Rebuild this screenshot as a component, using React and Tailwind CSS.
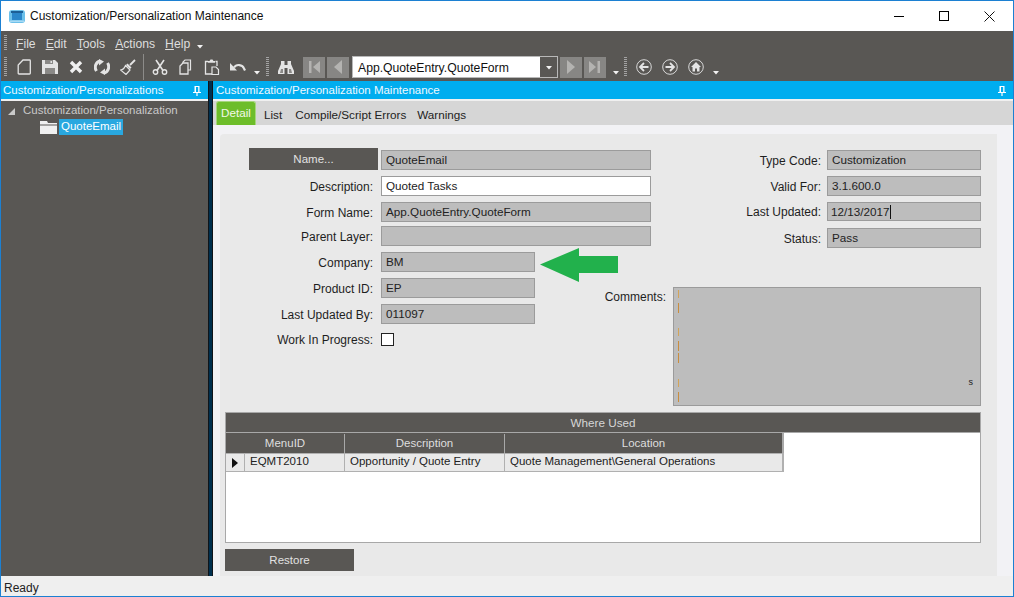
import React from "react";

const ink = "#e4e4e4";

function Grip({ className = "" }) {
  return (
    <div
      className={`w-[3px] flex-none bg-[repeating-linear-gradient(to_bottom,#a3a3a3_0,#a3a3a3_1px,transparent_1px,transparent_2px)] ${className}`}
    />
  );
}

function Caret({ className = "" }) {
  return (
    <svg width="6" height="5" viewBox="0 0 6 5" className={`flex-none ${className}`}>
      <path d="M0 1h6L3 4.5z" fill="#f2f2f2" />
    </svg>
  );
}

function Ico({ children, className = "" }) {
  return (
    <svg width="16" height="16" viewBox="0 0 16 16" fill="none" className={`flex-none ${className}`}>
      {children}
    </svg>
  );
}

function Pin() {
  return (
    <svg width="8" height="10" viewBox="0 0 8 10" className="flex-none">
      <path d="M1.5 0h5v6H8v1H4.6v3H3.4V7H0V6h1.5zM3 1v5h2.2V1z" fill="#fff" fillRule="evenodd" />
    </svg>
  );
}

function NavBtn({ d, bar }) {
  return (
    <div className="w-[22px] h-[21px] flex-none bg-[#878684] flex items-center justify-center">
      <svg width="14" height="14" viewBox="0 0 14 14">
        <path d={d} fill="#b4b3b1" />
        {bar && <path d={bar} fill="#b4b3b1" />}
      </svg>
    </div>
  );
}

function Field({ children, className = "w-[270px] h-5", white }) {
  return (
    <div
      className={`flex-none border border-[#9b9b9b] pl-[4px] flex items-center text-[11.7px] text-[#222] ${
        white ? "bg-white" : "bg-[#bdbdbd]"
      } ${className}`}
    >
      {children}
    </div>
  );
}

function Label({ children, className = "w-[148px]" }) {
  return <div className={`flex-none text-right text-[12px] text-[#1e1e1e] pt-px ${className}`}>{children}</div>;
}

function Row({ label, children, className = "" }) {
  return (
    <div className={`flex items-center gap-2 h-5 ${className}`}>
      <Label>{label}</Label>
      {children}
    </div>
  );
}

function SideRow({ label, children, className = "" }) {
  return (
    <div className={`flex items-center justify-end gap-[6px] ${className}`}>
      <Label className="w-[100px]">{label}</Label>
      {children}
    </div>
  );
}

export default function App() {
  return (
    <div
      className="w-[1014px] h-[597px] flex flex-col border border-[#1c80d2] bg-white overflow-hidden text-[12px]"
      style={{ fontFamily: '"Liberation Sans", Arial, sans-serif' }}
    >
      {/* title bar */}
      <div className="h-[30px] flex-none flex items-center bg-white">
        <svg width="16" height="13" viewBox="0 0 16 13" className="ml-2 flex-none">
          <rect x="0" y="0" width="16" height="13" rx="3" fill="#6cc0ea" />
          <rect x="2" y="1" width="12" height="2" fill="#1d5f96" />
          <rect x="3" y="3" width="10" height="7" fill="#2b86c9" />
          <rect x="1" y="10.5" width="14" height="1.5" fill="#a8daf4" />
        </svg>
        <span className="ml-[5px] text-[12px] text-[#111]">Customization/Personalization Maintenance</span>
        <div className="ml-auto flex items-center mr-[18px]">
          <div className="w-[10px] h-px bg-black" />
          <div className="w-[10px] h-[10px] border border-black ml-[35px]" />
          <svg width="11" height="11" viewBox="0 0 11 11" className="ml-[35px]">
            <path d="M.5.5l10 10M10.5.5l-10 10" stroke="#111" />
          </svg>
        </div>
      </div>

      {/* menu */}
      <div className="h-[22px] flex-none flex items-center bg-[#595754] text-[#dedede] text-[12.2px]">
        <Grip className="ml-[3px] h-[15px]" />
        <div className="ml-[9px] flex gap-[10px] pt-[4px]">
          <span><u>F</u>ile</span>
          <span><u>E</u>dit</span>
          <span><u>T</u>ools</span>
          <span><u>A</u>ctions</span>
          <span><u>H</u>elp</span>
        </div>
        <Caret className="ml-[7px] mt-[8px]" />
      </div>

      {/* toolbar */}
      <div className="h-[28px] flex-none flex items-center bg-[#595754]">
        <Grip className="ml-[3px] h-[20px]" />
        <div className="ml-[9px] flex gap-[10px] items-center">
          <Ico>
            <path d="M7 1h6.5a.8.8 0 0 1 .8.8v12.4a.8.8 0 0 1-.8.8H3a.8.8 0 0 1-.8-.8V6z" stroke={ink} strokeWidth="1.3" />
          </Ico>
          <Ico>
            <path d="M0 1h13l3 3v11H0z" fill={ink} />
            <path d="M3 1h8v4H3z" fill="#8a8987" />
            <path d="M8.5 2H10v2H8.5z" fill={ink} />
            <path d="M3 9h10v6H3z" fill="#8a8987" />
          </Ico>
          <Ico>
            <path d="M3 3l10 10M13 3L3 13" stroke="#f0f0f0" strokeWidth="3.4" />
          </Ico>
          <Ico>
            <path d="M2.500 12A6.500 6.500 0 0 1 6 2M13.500 4a6.500 6.500 0 0 1-3.500 10" stroke={ink} strokeWidth="3" />
            <path d="M5 0l5 2.500L5 6.500zM11 16l-5-2.500L11 9.500z" fill={ink} />
          </Ico>
          <Ico>
            <path d="M10 6l5-5" stroke={ink} strokeWidth="1.8" />
            <path d="M7.500 4.500l4 4-1.500 1.500-4-4z" fill={ink} />
            <path d="M5.500 6.500L10 11l-4 4.500-5.500-4.500c2 0 4-2 5-4.500z" stroke={ink} strokeWidth="1.2" />
          </Ico>
        </div>
        <div className="ml-[7px] w-px h-[26px] bg-[#8c8b89] flex-none" />
        <div className="ml-[8px] flex gap-[10px] items-center">
          <Ico>
            <circle cx="3.5" cy="13" r="2.2" stroke={ink} strokeWidth="1.4" />
            <circle cx="12.5" cy="13" r="2.2" stroke={ink} strokeWidth="1.4" />
            <path d="M5 11.500L12 1M11 11.500L4 1" stroke={ink} strokeWidth="1.6" />
          </Ico>
          <Ico>
            <path d="M5 4V3l2-2h5.500v10H10" stroke={ink} strokeWidth="1.2" />
            <path d="M5 4h5v11H2V7z" stroke={ink} strokeWidth="1.3" />
          </Ico>
          <Ico>
            <path d="M4 2.500H1.500V15H8" stroke={ink} strokeWidth="1.3" />
            <path d="M11.500 2.500H13V7" stroke={ink} strokeWidth="1.3" />
            <path d="M4 3.800V2h1.500L6.500.500h2L9.500 2H11v1.800z" fill={ink} />
            <path d="M8 8h4l2.500 2.500V15.500H8z" stroke={ink} strokeWidth="1.2" />
          </Ico>
          <Ico>
            <path d="M4 8.500A5.500 5 0 0 1 14 9.500l1 2" stroke={ink} strokeWidth="2.2" />
            <path d="M0 4v7.500h7z" fill={ink} />
          </Ico>
        </div>
        <Caret className="ml-[8px] mt-[11px]" />
        <Grip className="ml-[6px] h-[20px]" />
        <Ico className="ml-[9px]">
          <path d="M3 2h3.500v4h3V2H13v3l3 7v3H9.500V9h-3v6H0v-3l3-7z" fill={ink} />
          <path d="M3 10h2v4H2zM11 10h2l1 4h-3z" fill="#8a8987" />
        </Ico>
        <div className="ml-[9px]">
          <NavBtn d="M6 7l7-6v12z" bar="M2 1h2.500v12H2z" />
        </div>
        <div className="ml-[2px]">
          <NavBtn d="M3 7l8-7v14z" />
        </div>
        <div className="ml-[3px] w-[206px] h-[22px] flex-none border border-[#b8b8b8] bg-white flex">
          <div className="flex-1 pl-[5px] pt-[2px] flex items-center text-[12.2px] text-[#111]">App.QuoteEntry.QuoteForm</div>
          <div className="w-[17px] bg-[#595754] flex items-center justify-center">
            <Caret />
          </div>
        </div>
        <div className="ml-[2px]">
          <NavBtn d="M3 0l8 7-8 7z" />
        </div>
        <div className="ml-[2px]">
          <NavBtn d="M1 1l7 6-7 6z" bar="M9.500 1H12v12H9.500z" />
        </div>
        <Caret className="ml-[7px] mt-[11px]" />
        <Grip className="ml-[5px] h-[20px]" />
        <div className="ml-[9px] flex gap-[10px] items-center">
          <Ico>
            <circle cx="8" cy="8" r="7.3" stroke="#d8d8d8" strokeWidth="1" />
            <path d="M12.500 8H5M8 4L4 8l4 4" stroke={ink} strokeWidth="1.8" />
          </Ico>
          <Ico>
            <circle cx="8" cy="8" r="7.3" stroke="#d8d8d8" strokeWidth="1" />
            <path d="M3.500 8H11M8 4l4 4-4 4" stroke={ink} strokeWidth="1.8" />
          </Ico>
          <Ico>
            <circle cx="8" cy="8" r="7.3" stroke="#d8d8d8" strokeWidth="1" />
            <path d="M8 3L3 8h1.500v4.500h2.500V9.500h2v3h2.500V8H13z" fill={ink} />
          </Ico>
        </div>
        <Caret className="ml-[9px] mt-[11px]" />
      </div>

      {/* panels */}
      <div className="flex-1 min-h-0 flex bg-[#595754]">
        <div className="w-[207px] flex-none flex flex-col">
          <div className="h-[18px] flex-none bg-[#00adef] flex items-center justify-between pl-[2px] pr-[7px] pt-px text-[11.5px] text-[#eef9ff]">
            <span>Customization/Personalizations</span>
            <Pin />
          </div>
          <div className="h-[2px] flex-none bg-[#f0f0f0]" />
          <div className="pt-px">
            <div className="h-[17px] flex items-center text-[11.5px] text-[#c9c9c9]">
              <svg width="7" height="7" viewBox="0 0 7 7" className="ml-[7px] mt-px flex-none">
                <path d="M7 0v7H0z" fill="#c9c9c9" />
              </svg>
              <span className="ml-[8px]">Customization/Personalization</span>
            </div>
            <div className="flex items-center">
              <svg width="17" height="14" viewBox="0 0 17 14" className="ml-[39px] flex-none">
                <path d="M0 1h7l1 2h9v1.500H0z" fill="#f0f0f0" />
                <path d="M0 5.500h17V14H0z" fill="#f0f0f0" />
              </svg>
              <span className="ml-[2px] h-4 px-[2px] flex items-center bg-[#29a8e0] text-[11.5px] text-white">QuoteEmail</span>
            </div>
          </div>
        </div>

        <div className="w-[5px] flex-none bg-[#00304f] border-x border-[#10151a]" />

        <div className="flex-1 min-w-0 flex flex-col bg-[#f2f2f5]">
          <div className="h-[18px] flex-none bg-[#00adef] flex items-center justify-between pl-[3px] pr-[7px] pt-px text-[11.5px] text-[#eef9ff]">
            <span>Customization/Personalization Maintenance</span>
            <Pin />
          </div>
          <div className="h-[2px] flex-none bg-[#f0f0f0]" />
          <div className="h-[24px] flex-none bg-[#d6d6d6] flex items-end text-[11.7px] text-[#222]">
            <div className="ml-[3px] w-[40px] h-[24px] pb-px bg-[#6dbd2a] border border-b-0 border-[#a5d67c] rounded-t-[3px] flex items-center justify-center text-[#f2f8e8]">
              Detail
            </div>
            <div className="h-full flex items-center ml-[8px] gap-[11px] pt-[3px]">
              <span className="mr-[2px]">List</span>
              <span>Compile/Script Errors</span>
              <span>Warnings</span>
            </div>
          </div>

          <div className="flex-1 min-h-0 ml-[7px] mr-[16px] mt-[9px] bg-[#e9e9e9] rounded-tl-[4px] pl-[5px] pt-[14px]">
            <div className="flex h-[264px]">
              {/* left column of the form */}
              <div className="w-[426px] flex-none">
                <div className="flex items-end">
                  <div className="ml-[24px] w-[129px] h-[22px] pt-px bg-[#595754] text-[11.5px] text-[#e2e2e2] flex items-center justify-center flex-none">
                    Name...
                  </div>
                  <div className="ml-[3px]">
                    <Field>QuoteEmail</Field>
                  </div>
                </div>
                <Row label="Description:" className="mt-[6px]">
                  <Field white>Quoted Tasks</Field>
                </Row>
                <Row label="Form Name:" className="mt-[6px]">
                  <Field>App.QuoteEntry.QuoteForm</Field>
                </Row>
                <Row label="Parent Layer:" className="mt-[4px]">
                  <Field />
                </Row>
                <Row label="Company:" className="mt-[6px]">
                  <Field className="w-[154px] h-5">BM</Field>
                  <svg width="80" height="34" viewBox="0 0 80 34" className="ml-[-4px] mt-[6px] flex-none">
                    <path d="M1 16.500L40 0v8h39v17H40v9z" fill="#22b14c" />
                  </svg>
                </Row>
                <Row label="Product ID:" className="mt-[6px]">
                  <Field className="w-[154px] h-5">EP</Field>
                </Row>
                <Row label="Last Updated By:" className="mt-[6px]">
                  <Field className="w-[154px] h-5">011097</Field>
                </Row>
                <div className="flex items-center gap-2 mt-[6px]">
                  <Label>Work In Progress:</Label>
                  <div className="w-[13px] h-[13px] bg-white border border-[#222] flex-none" />
                </div>
              </div>

              {/* right column of the form */}
              <div className="w-[330px] flex-none pt-[2px]">
                <SideRow label="Type Code:">
                  <Field className="w-[154px] h-5">Customization</Field>
                </SideRow>
                <SideRow label="Valid For:" className="mt-[6px]">
                  <Field className="w-[154px] h-5">3.1.600.0</Field>
                </SideRow>
                <SideRow label="Last Updated:" className="mt-[6px]">
                  <Field className="w-[154px] h-[19px]">
                    <span className="-ml-px">12/13/2017</span>
                    <span className="w-px h-[14px] bg-[#111]" />
                  </Field>
                </SideRow>
                <SideRow label="Status:" className="mt-[7px]">
                  <Field className="w-[154px] h-5">Pass</Field>
                </SideRow>
                <div className="flex justify-end gap-[7px] mt-[39px] ml-[-85px]">
                  <Label className="w-[100px] pt-[2px]">Comments:</Label>
                  <div className="relative w-[308px] h-[119px] bg-[#bdbdbd] border border-[#9b9b9b]">
                    <div className="absolute left-[4px] top-[2px] w-px h-[8px] bg-[#d2a45a]" />
                    <div className="absolute left-[4px] top-[15px] w-px h-[10px] bg-[#c98d3e]" />
                    <div className="absolute left-[4px] top-[40px] w-px h-[8px] bg-[#d2a45a]" />
                    <div className="absolute left-[4px] top-[53px] w-px h-[10px] bg-[#c98d3e]" />
                    <div className="absolute left-[4px] top-[65px] w-px h-[10px] bg-[#c98d3e]" />
                    <div className="absolute left-[4px] top-[91px] w-px h-[8px] bg-[#d2a45a]" />
                    <div className="absolute left-[4px] top-[104px] w-px h-[10px] bg-[#c98d3e]" />
                    <span className="absolute right-[7px] top-[88px] text-[9px] text-[#222]">s</span>
                  </div>
                </div>
              </div>
            </div>

            {/* where used grid */}
            <div className="w-[756px] h-[131px] border border-[#a8a8a8] bg-white">
              <div className="h-5 bg-[#595754] border-b border-[#a8a8a8] text-[11.7px] text-[#d6d6d6] flex items-center justify-center">
                Where Used
              </div>
              <div className="flex h-5 w-[558px] pt-px bg-[#595754] text-[11.5px] text-[#dedede] border-r-2 border-[#a8a8a8]">
                <div className="w-[119px] flex items-center justify-center border-r border-[#a8a8a8]">MenuID</div>
                <div className="w-[160px] flex items-center justify-center border-r border-[#a8a8a8]">Description</div>
                <div className="flex-1 flex items-center justify-center">Location</div>
              </div>
              <div className="flex h-[19px] w-[558px] bg-[#e9e9e9] border-y border-r-2 border-[#b0b0b0] text-[#222] text-[11.5px]">
                <div className="w-[19px] flex items-center justify-center border-r border-[#b0b0b0]">
                  <svg width="6" height="10" viewBox="0 0 6 10">
                    <path d="M0 0l6 5-6 5z" fill="#111" />
                  </svg>
                </div>
                <div className="w-[100px] flex items-center pl-[5px] pb-px border-r border-[#b0b0b0]">EQMT2010</div>
                <div className="w-[160px] flex items-center pl-[5px] pb-px border-r border-[#b0b0b0]">Opportunity / Quote Entry</div>
                <div className="flex-1 flex items-center pl-[5px] pb-px">Quote Management\General Operations</div>
              </div>
            </div>
            <div className="mt-[6px] w-[129px] h-[22px] pt-px bg-[#595754] text-[11.5px] text-[#e2e2e2] flex items-center justify-center">
              Restore
            </div>
          </div>
        </div>
      </div>

      {/* status bar */}
      <div className="h-5 flex-none bg-[#efefef] flex items-center pl-[3px] pt-[3px] text-[12px] text-[#222]">Ready</div>
    </div>
  );
}
